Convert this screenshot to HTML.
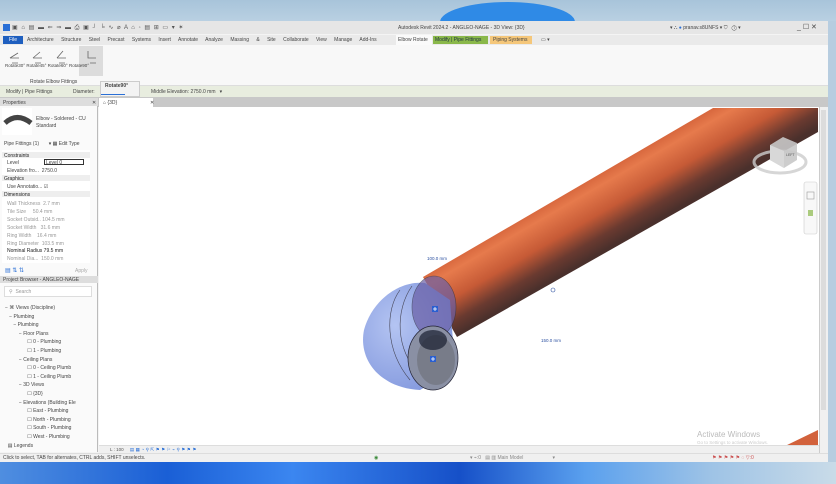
<!DOCTYPE html>
<html><head><meta charset="utf-8"><style>
*{margin:0;padding:0;box-sizing:border-box}
body{width:836px;height:484px;overflow:hidden;position:relative;font-family:"Liberation Sans",sans-serif;font-size:5px;color:#333;background:#b7cde0}
.a{position:absolute}
.t{position:absolute;white-space:nowrap;font-size:5px;color:#444}
</style></head><body>
<div class="a" style="left:0;top:0;width:836px;height:21px;background:linear-gradient(#a8c4da,#b9d0e2)"></div>
<div class="a" style="left:440px;top:2px;width:135px;height:40px;border-radius:50%;background:#2f8ae6"></div>
<div class="a" style="left:0;top:462px;width:836px;height:22px;background:linear-gradient(90deg,#4f8ee0,#1a5fd6 20%,#3b86f0 35%,#1650c8 55%,#5aa0ee 70%,#9ec3e6 85%,#c9dbe8)"></div>
<div class="a" style="left:0;top:21px;width:828px;height:441px;background:#f4f4f4"></div>
<div class="a" style="left:0;top:21px;width:828px;height:13px;background:#e6e6e6"></div>
<div class="a" style="left:3px;top:24px;width:7px;height:7px;background:#2a6fd6"></div>
<div class="t" style="left:12px;top:24px;color:#555;font-size:6px;letter-spacing:1px">▣ ⌂ ▤ ▬ ⇐ ⇒ ▬ ⎙ ▣ ┘ ╘ ∿ ⌀ A ⌂ ◦ ▤ ⊞ ▭ ▾ ✶</div>
<div class="t" style="left:398px;top:25px">Autodesk Revit 2024.2 - ANGLEO-NAGE - 3D View: {3D}</div>
<div class="t" style="left:670px;top:25px">▾ ⛬ <span style="color:#2a6fd6">●</span> pranav.s8UNFS ▾ ⛉ &nbsp; ⓘ ▾</div>
<div class="t" style="left:797px;top:23px;font-size:7px">_ ☐ ✕</div>
<div class="a" style="left:0;top:35px;width:828px;height:10px;background:#eaeaea"></div>
<div class="a" style="left:3px;top:36px;width:20px;height:8px;background:#1f5fbf;color:#fff;font-size:5px;text-align:center;line-height:8px">File</div>
<div class="t" style="left:27px;top:37px;word-spacing:6px">Architecture Structure Steel Precast Systems Insert Annotate Analyze Massing&nbsp;&amp;&nbsp;Site Collaborate View Manage Add-Ins</div>
<div class="a" style="left:396px;top:35px;width:36px;height:10px;background:#fafafa"></div>
<div class="t" style="left:398px;top:37px">Elbow Rotate</div>
<div class="a" style="left:433px;top:36px;width:55px;height:8px;background:#8ab84a"></div>
<div class="t" style="left:435px;top:37px;color:#234">Modify | Pipe Fittings</div>
<div class="a" style="left:490px;top:36px;width:42px;height:8px;background:#f5c77a"></div>
<div class="t" style="left:493px;top:37px">Piping Systems</div>
<div class="t" style="left:541px;top:37px">▭ ▾</div>
<div class="a" style="left:0;top:45px;width:828px;height:41px;background:#f8f8f8;border-bottom:1px solid #ddd"></div>
<div class="a" style="left:79px;top:46px;width:24px;height:30px;background:#dcdcdc"></div>
<svg class="a" style="left:0;top:46px" width="110" height="30">
<g stroke="#666" fill="none" stroke-width="0.8">
<path d="M10 12 l8 -5 M10 12 h9 M12 17 h6"/><path d="M33 12 l7 -6 M33 12 h9 M35 17 h6"/><path d="M57 12 l6 -7 M57 12 h9 M59 17 h6"/><path d="M88 5 v7 h8 M90 17 h6"/>
</g></svg>
<div class="t" style="left:5px;top:63px;font-size:4.5px">Rotate30° Rotate45° Rotate60° Rotate90°</div>
<div class="t" style="left:30px;top:79px">Rotate Elbow Fittings</div>
<div class="a" style="left:0;top:86px;width:828px;height:11px;background:#e8eddf"></div>
<div class="t" style="left:6px;top:89px">Modify | Pipe Fittings</div>
<div class="t" style="left:73px;top:89px">Diameter:</div>
<div class="a" style="left:100px;top:81px;width:40px;height:16px;background:#f3f3f3;border:1px solid #ccc"></div>
<div class="t" style="left:105px;top:83px;font-weight:bold">Rotate90°</div>
<div class="a" style="left:101px;top:94px;width:24px;height:1px;background:#2a6fd6"></div>
<div class="t" style="left:151px;top:89px">Middle Elevation: 2750.0 mm &nbsp; ▾</div>
<div class="a" style="left:0;top:97px;width:828px;height:10px;background:#c8c8c8"></div>
<div class="a" style="left:99px;top:98px;width:54px;height:9px;background:#fff"></div>
<div class="t" style="left:103px;top:100px">⌂ {3D}</div>
<div class="t" style="left:150px;top:100px">✕</div>
<div class="a" style="left:0;top:98px;width:98px;height:354px;background:#fafafa;border-right:1px solid #bbb"></div>
<div class="a" style="left:0;top:98px;width:98px;height:8px;background:#ddd"></div>
<div class="t" style="left:3px;top:100px">Properties</div><div class="t" style="left:92px;top:100px">✕</div>
<div class="a" style="left:2px;top:108px;width:30px;height:27px;background:#fff"></div>
<svg class="a" style="left:3px;top:112px" width="30" height="16"><path d="M2 11 Q14 0 28 11" stroke="#444" stroke-width="5" fill="none"/></svg>
<div class="t" style="left:36px;top:116px">Elbow - Soldered - CU</div>
<div class="t" style="left:36px;top:123px">Standard</div>
<div class="t" style="left:4px;top:141px">Pipe Fittings (1) &nbsp; &nbsp; &nbsp; ▾ ▦ Edit Type</div>
<div class="a" style="left:2px;top:150px;width:88px;height:113px;background:#fff"></div>
<div class="a" style="left:2px;top:152px;width:88px;height:6px;background:#eee"></div>
<div class="t" style="left:4px;top:153px;color:#222">Constraints</div>
<div class="t" style="left:7px;top:160px">Level</div><div class="a" style="left:44px;top:159px;width:40px;height:6px;border:1px solid #333"></div><div class="t" style="left:46px;top:160px">Level 0</div>
<div class="t" style="left:7px;top:168px">Elevation fro... &nbsp;2750.0</div>
<div class="a" style="left:2px;top:175px;width:88px;height:6px;background:#eee"></div>
<div class="t" style="left:4px;top:176px;color:#222">Graphics</div>
<div class="t" style="left:7px;top:184px">Use Annotatio... ☑</div>
<div class="a" style="left:2px;top:191px;width:88px;height:6px;background:#eee"></div>
<div class="t" style="left:4px;top:192px;color:#222">Dimensions</div>
<div class="t" style="left:7px;top:200px;color:#999;line-height:8px">Wall Thickness &nbsp;2.7 mm<br>Tile Size &nbsp; &nbsp; 50.4 mm<br>Socket Outsid.. 104.5 mm<br>Socket Width &nbsp; 31.6 mm<br>Ring Width &nbsp; &nbsp;16.4 mm<br>Ring Diameter &nbsp;103.5 mm</div>
<div class="t" style="left:7px;top:248px;color:#222">Nominal Radius 79.5 mm</div>
<div class="t" style="left:7px;top:256px;color:#999">Nominal Dia... &nbsp;150.0 mm</div>
<div class="t" style="left:5px;top:267px;color:#2a6fd6;font-size:6px">▤ ⇅ ⇅</div>
<div class="t" style="left:75px;top:268px;color:#aaa">Apply</div>
<div class="a" style="left:0;top:276px;width:98px;height:7px;background:#ddd"></div>
<div class="t" style="left:3px;top:277px">Project Browser - ANGLEO-NAGE</div>
<div class="a" style="left:4px;top:286px;width:88px;height:11px;background:#fff;border:1px solid #ddd"></div>
<div class="t" style="left:9px;top:289px;color:#999">⚲ &nbsp;Search</div>
<div class="t" style="left:5px;top:304px;line-height:8.6px;color:#444">
−&nbsp;⌘ Views (Discipline)<br>
&nbsp;&nbsp;&nbsp;−&nbsp;Plumbing<br>
&nbsp;&nbsp;&nbsp;&nbsp;&nbsp;&nbsp;−&nbsp;Plumbing<br>
&nbsp;&nbsp;&nbsp;&nbsp;&nbsp;&nbsp;&nbsp;&nbsp;&nbsp;&nbsp;−&nbsp;Floor Plans<br>
&nbsp;&nbsp;&nbsp;&nbsp;&nbsp;&nbsp;&nbsp;&nbsp;&nbsp;&nbsp;&nbsp;&nbsp;&nbsp;&nbsp;&nbsp;&nbsp;☐ 0 - Plumbing<br>
&nbsp;&nbsp;&nbsp;&nbsp;&nbsp;&nbsp;&nbsp;&nbsp;&nbsp;&nbsp;&nbsp;&nbsp;&nbsp;&nbsp;&nbsp;&nbsp;☐ 1 - Plumbing<br>
&nbsp;&nbsp;&nbsp;&nbsp;&nbsp;&nbsp;&nbsp;&nbsp;&nbsp;&nbsp;−&nbsp;Ceiling Plans<br>
&nbsp;&nbsp;&nbsp;&nbsp;&nbsp;&nbsp;&nbsp;&nbsp;&nbsp;&nbsp;&nbsp;&nbsp;&nbsp;&nbsp;&nbsp;&nbsp;☐ 0 - Ceiling Plumb<br>
&nbsp;&nbsp;&nbsp;&nbsp;&nbsp;&nbsp;&nbsp;&nbsp;&nbsp;&nbsp;&nbsp;&nbsp;&nbsp;&nbsp;&nbsp;&nbsp;☐ 1 - Ceiling Plumb<br>
&nbsp;&nbsp;&nbsp;&nbsp;&nbsp;&nbsp;&nbsp;&nbsp;&nbsp;&nbsp;−&nbsp;3D Views<br>
&nbsp;&nbsp;&nbsp;&nbsp;&nbsp;&nbsp;&nbsp;&nbsp;&nbsp;&nbsp;&nbsp;&nbsp;&nbsp;&nbsp;&nbsp;&nbsp;☐ {3D}<br>
&nbsp;&nbsp;&nbsp;&nbsp;&nbsp;&nbsp;&nbsp;&nbsp;&nbsp;&nbsp;−&nbsp;Elevations (Building Ele<br>
&nbsp;&nbsp;&nbsp;&nbsp;&nbsp;&nbsp;&nbsp;&nbsp;&nbsp;&nbsp;&nbsp;&nbsp;&nbsp;&nbsp;&nbsp;&nbsp;☐ East - Plumbing<br>
&nbsp;&nbsp;&nbsp;&nbsp;&nbsp;&nbsp;&nbsp;&nbsp;&nbsp;&nbsp;&nbsp;&nbsp;&nbsp;&nbsp;&nbsp;&nbsp;☐ North - Plumbing<br>
&nbsp;&nbsp;&nbsp;&nbsp;&nbsp;&nbsp;&nbsp;&nbsp;&nbsp;&nbsp;&nbsp;&nbsp;&nbsp;&nbsp;&nbsp;&nbsp;☐ South - Plumbing<br>
&nbsp;&nbsp;&nbsp;&nbsp;&nbsp;&nbsp;&nbsp;&nbsp;&nbsp;&nbsp;&nbsp;&nbsp;&nbsp;&nbsp;&nbsp;&nbsp;☐ West - Plumbing<br>
&nbsp;&nbsp;▤ Legends</div>
<div class="a" style="left:99px;top:107px;width:720px;height:338px;background:#fff"></div>
<div class="a" style="left:819px;top:107px;width:9px;height:346px;background:#f0f0f0;border-left:1px solid #ccc"></div>
<div class="a" style="left:821px;top:110px;width:5px;height:300px;background:#dcdcdc"></div>
<svg class="a" style="left:0;top:0" width="836" height="484">
<defs>
<linearGradient id="pg" gradientUnits="userSpaceOnUse" x1="560" y1="197" x2="594" y2="256">
<stop offset="0" stop-color="#d8683e"/><stop offset="0.15" stop-color="#e67a4c"/><stop offset="0.5" stop-color="#c65a36"/><stop offset="0.8" stop-color="#6a3a30"/><stop offset="1" stop-color="#4a302c"/></linearGradient>
<radialGradient id="eg" cx="0.35" cy="0.4" r="0.75"><stop offset="0" stop-color="#b4c4f2"/><stop offset="1" stop-color="#7f95dc"/></radialGradient>
</defs>
<polygon points="423,277 713,108 818,108 818,132 457,337" fill="url(#pg)"/>
<path d="M425 283 C400 280 372 300 364 330 C358 360 380 388 420 390 L455 370 L450 300 Z" fill="url(#eg)"/>
<ellipse cx="434" cy="307" rx="22" ry="31" fill="#6a5fa6" opacity="0.7" stroke="#334" stroke-width="0.6"/>
<path d="M400 290 C385 310 385 350 410 380 M412 286 C395 310 395 350 420 375" stroke="#445" stroke-width="0.6" fill="none"/>
<ellipse cx="433" cy="358" rx="25" ry="32" fill="#8a90a4" stroke="#223" stroke-width="0.7"/>
<ellipse cx="436" cy="360" rx="19" ry="25" fill="#70747e" opacity="0.7"/>
<ellipse cx="433" cy="340" rx="14" ry="10" fill="#1a1f30" opacity="0.7"/>
<rect x="432" y="306" width="6" height="6" fill="#2a5fd0"/><rect x="430" y="356" width="6" height="6" fill="#2a5fd0"/>
<path d="M433 309 h4 M435 307 v4 M431 359 h4 M433 357 v4" stroke="#fff" stroke-width="0.8"/>
<text x="427" y="260" font-size="4.5" fill="#2a4fa0" font-family="Liberation Sans">100.0 mm</text>
<text x="541" y="342" font-size="4.5" fill="#2a4fa0" font-family="Liberation Sans">150.0 mm</text>
<circle cx="553" cy="290" r="2" fill="none" stroke="#2a4fa0" stroke-width="0.6"/>
<ellipse cx="780" cy="162" rx="26" ry="11" fill="none" stroke="#ccc" stroke-width="3" opacity="0.8"/>
<polygon points="770,145 783,137 797,143 797,160 784,168 770,160" fill="#c8c8c8" opacity="0.9"/>
<polygon points="770,145 784,151 784,168 770,160" fill="#d8d8d8"/>
<text x="786" y="156" font-size="3.5" fill="#555" font-family="Liberation Sans">LEFT</text>
<rect x="804" y="182" width="13" height="52" rx="2" fill="#f8f8f8" stroke="#ccc" stroke-width="0.6"/>
<rect x="807" y="192" width="7" height="7" fill="none" stroke="#999" stroke-width="0.6"/>
<rect x="808" y="210" width="5" height="6" fill="#8ab84a" opacity="0.7"/>
</svg>
<div class="t" style="left:697px;top:430px;font-size:8px;color:#bbb">Activate Windows</div>
<div class="t" style="left:697px;top:440px;font-size:4.5px;color:#ccc">Go to Settings to activate Windows.</div>
<svg class="a" style="left:785px;top:430px" width="34" height="16"><polygon points="33,0 33,16 0,16" fill="#d2623c"/></svg>
<div class="a" style="left:99px;top:445px;width:720px;height:8px;background:#f0f0f0;border-top:1px solid #ddd"></div>
<div class="t" style="left:110px;top:447px;font-size:4.5px;color:#555">L : 100 &nbsp; &nbsp; <span style="color:#2a6fd6;letter-spacing:1.5px">▤▦◔⚲⇱⚑⚑⚐⌁⚲⚑⚑⚑</span></div>
<div class="a" style="left:0;top:453px;width:828px;height:9px;background:#f0f0f0;border-top:1px solid #ddd"></div>
<div class="t" style="left:3px;top:455px">Click to select, TAB for alternates, CTRL adds, SHIFT unselects.</div>
<div class="t" style="left:374px;top:455px;color:#3a8a3a">◉</div>
<div class="t" style="left:470px;top:455px;color:#888">▾ ⌁:0 &nbsp; ▤ ▥ Main Model &nbsp; &nbsp; &nbsp; &nbsp; &nbsp; &nbsp; &nbsp; &nbsp; &nbsp; &nbsp; ▾</div>
<div class="t" style="left:712px;top:455px;color:#c55">⚑ ⚑ ⚑ ⚑ ⚑ ◌ ▽:0</div>
</body></html>
